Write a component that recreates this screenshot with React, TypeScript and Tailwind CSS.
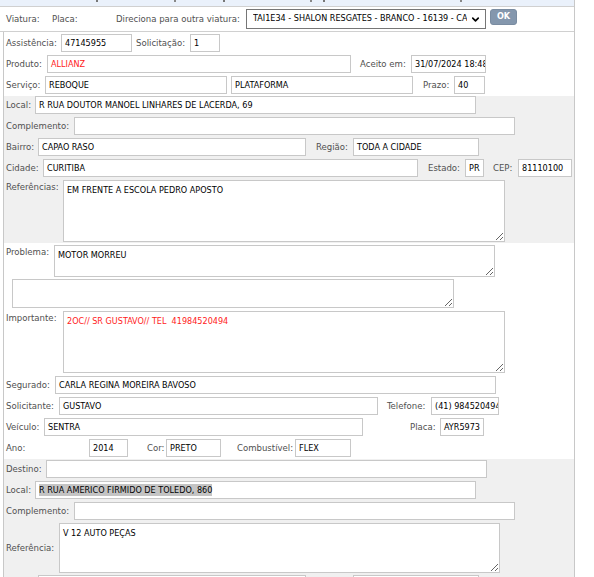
import { ChevronDown } from "lucide-react";

const LBL = "text-[9.5px] leading-[12px] text-[#505050] whitespace-nowrap shrink-0";
const INP =
  "h-[18px] shrink-0 border border-[#c8c8c8] bg-white pl-[3px] text-[9px] leading-[16px] whitespace-nowrap overflow-hidden";
const TA =
  "block shrink-0 resize border border-[#c8c8c8] bg-white pl-[3px] pt-[3px] text-[9px] leading-[12px] outline-none overflow-hidden";

export default function App() {
  return (
    <div className="w-[594px] h-[577px] overflow-hidden bg-white text-black font-['DejaVu_Sans_Condensed','DejaVu_Sans',sans-serif]">
      <div className="w-[575px] border-r border-[#c8c8c8] h-[577px]">
        {/* top clipped strip */}
        <div className="h-[7px] bg-[#eaf1fb] border-b border-[#d0d0d0] flex items-start">
          <div className="ml-[96px] w-[2px] h-[2px] bg-[#777]" />
          <div className="ml-[76px] w-[2px] h-[2px] bg-[#888]" />
          <div className="ml-[47px] w-[2px] h-[2px] bg-[#777]" />
          <div className="ml-[85px] w-[2px] h-[2px] bg-[#888]" />
          <div className="ml-[11px] w-[2px] h-[2px] bg-[#777]" />
          <div className="ml-[135px] w-[2px] h-[2px] bg-[#888]" />
        </div>

        {/* Viatura row */}
        <div className="h-[25px] border-b border-[#d0d0d0] flex items-center pl-[6px]">
          <span className={`${LBL} w-[46px]`}>Viatura:</span>
          <span className={`${LBL} w-[64px]`}>Placa:</span>
          <span className={`${LBL} w-[130px]`}>Direciona para outra viatura:</span>
          <div className="w-[240px] h-[20px] border border-[#767676] bg-white flex items-center pl-[6px] pr-[4px]">
            <span className="flex-1 overflow-hidden whitespace-nowrap text-[9px] text-black">
              TAI1E34 - SHALON RESGATES - BRANCO - 16139 - CAMINHAO
            </span>
            <ChevronDown size={11} strokeWidth={3.5} className="text-black ml-[3px] shrink-0" />
          </div>
          <div className="ml-[4px] self-start mt-[2px] w-[27px] h-[16px] rounded-[3px] bg-[#8497ad] border border-[#7a8ca1] flex items-center justify-center text-[9px] font-bold text-white">
            OK
          </div>
        </div>

        {/* body */}
        <div className="ml-[3px] border-l border-[#c8c8c8] h-[545px]">
          {/* section 1 white */}
          <div className="pt-[2px] pb-[2px] pl-[2px]">
            <div className="flex items-center h-[18px]">
              <span className={`${LBL} w-[55px]`}>Assistência:</span>
              <div className={`${INP} w-[71px]`}>47145955</div>
              <span className={`${LBL} ml-[4px] w-[54px]`}>Solicitação:</span>
              <div className={`${INP} w-[30px]`}>1</div>
            </div>
            <div className="flex items-center h-[18px] mt-[3px]">
              <span className={`${LBL} w-[41px]`}>Produto:</span>
              <div className={`${INP} w-[304px] text-[#ff1a1a]`}>ALLIANZ</div>
              <span className={`${LBL} ml-[9px] w-[51px]`}>Aceito em:</span>
              <div className={`${INP} w-[75px]`}>31/07/2024 18:48</div>
            </div>
            <div className="flex items-center h-[18px] mt-[3px]">
              <span className={`${LBL} w-[39px]`}>Serviço:</span>
              <div className={`${INP} w-[182px]`}>REBOQUE</div>
              <div className={`${INP} ml-[4px] w-[182px]`}>PLATAFORMA</div>
              <span className={`${LBL} ml-[10px] w-[31px]`}>Prazo:</span>
              <div className={`${INP} w-[31px]`}>40</div>
            </div>
          </div>

          {/* section 2 gray */}
          <div className="bg-[#f0f0f0] pb-[1px] pl-[2px]">
            <div className="flex items-center h-[18px]">
              <span className={`${LBL} w-[29px]`}>Local:</span>
              <div className={`${INP} w-[441px]`}>R RUA DOUTOR MANOEL LINHARES DE LACERDA, 69</div>
            </div>
            <div className="flex items-center h-[18px] mt-[3px]">
              <span className={`${LBL} w-[68px]`}>Complemento:</span>
              <div className={`${INP} w-[441px]`}></div>
            </div>
            <div className="flex items-center h-[18px] mt-[3px]">
              <span className={`${LBL} w-[32px]`}>Bairro:</span>
              <div className={`${INP} w-[268px]`}>CAPAO RASO</div>
              <span className={`${LBL} ml-[10px] w-[37px]`}>Região:</span>
              <div className={`${INP} w-[126px]`}>TODA A CIDADE</div>
            </div>
            <div className="flex items-center h-[18px] mt-[3px]">
              <span className={`${LBL} w-[37px]`}>Cidade:</span>
              <div className={`${INP} w-[375px]`}>CURITIBA</div>
              <span className={`${LBL} ml-[10px] w-[37px]`}>Estado:</span>
              <div className={`${INP} w-[19px] pl-[1px]`}>PR</div>
              <span className={`${LBL} ml-[9px] w-[25px]`}>CEP:</span>
              <div className={`${INP} w-[54px]`}>81110100</div>
            </div>
            <div className="flex items-start mt-[3px]">
              <span className={`${LBL} w-[57px] mt-[1px]`}>Referências:</span>
              <textarea
                readOnly
                className={`${TA} w-[442px] h-[62px] text-black`}
                defaultValue="EM FRENTE A ESCOLA PEDRO APOSTO"
              />
            </div>
          </div>

          {/* section 3 white */}
          <div className="pt-[2px] pb-[2px] pl-[2px]">
            <div className="flex items-start">
              <span className={`${LBL} w-[48px] mt-[1px]`}>Problema:</span>
              <textarea readOnly className={`${TA} w-[441px] h-[32px] text-black`} defaultValue="MOTOR MORREU" />
            </div>
            <div className="flex items-start mt-[2px]">
              <div className="w-[6px] shrink-0" />
              <textarea readOnly className={`${TA} w-[442px] h-[29px] text-black`} defaultValue="" />
            </div>
            <div className="flex items-start mt-[3px]">
              <span className={`${LBL} w-[57px] mt-[1px]`}>Importante:</span>
              <textarea
                readOnly
                className={`${TA} w-[442px] h-[62px] text-[#ff1a1a]`}
                defaultValue="2OC// SR GUSTAVO// TEL  41984520494"
              />
            </div>
            <div className="flex items-center h-[18px] mt-[3px]">
              <span className={`${LBL} w-[49px]`}>Segurado:</span>
              <div className={`${INP} w-[441px]`}>CARLA REGINA MOREIRA BAVOSO</div>
            </div>
            <div className="flex items-center h-[18px] mt-[3px]">
              <span className={`${LBL} w-[53px]`}>Solicitante:</span>
              <div className={`${INP} w-[319px]`}>GUSTAVO</div>
              <span className={`${LBL} ml-[9px] w-[44px]`}>Telefone:</span>
              <div className={`${INP} w-[68px]`}>(41) 984520494</div>
            </div>
            <div className="flex items-center h-[18px] mt-[3px]">
              <span className={`${LBL} w-[38px]`}>Veículo:</span>
              <div className={`${INP} w-[319px]`}>SENTRA</div>
              <span className={`${LBL} ml-[47px] w-[30px]`}>Placa:</span>
              <div className={`${INP} w-[44px]`}>AYR5973</div>
            </div>
            <div className="flex items-center h-[18px] mt-[3px]">
              <span className={`${LBL} w-[83px]`}>Ano:</span>
              <div className={`${INP} w-[39px]`}>2014</div>
              <span className={`${LBL} ml-[19px] w-[19px]`}>Cor:</span>
              <div className={`${INP} w-[55px]`}>PRETO</div>
              <span className={`${LBL} ml-[16px] w-[58px]`}>Combustível:</span>
              <div className={`${INP} w-[56px]`}>FLEX</div>
            </div>
          </div>

          {/* section 4 gray */}
          <div className="bg-[#f0f0f0] pt-[1px] pl-[2px] h-[200px]">
            <div className="flex items-center h-[18px]">
              <span className={`${LBL} w-[40px]`}>Destino:</span>
              <div className={`${INP} w-[441px]`}></div>
            </div>
            <div className="flex items-center h-[18px] mt-[3px]">
              <span className={`${LBL} w-[29px]`}>Local:</span>
              <div className={`${INP} w-[441px]`}>
                <span className="bg-[#c4c4c4] py-[1px]">R RUA AMERICO FIRMIDO DE TOLEDO, 860</span>
              </div>
            </div>
            <div className="flex items-center h-[18px] mt-[3px]">
              <span className={`${LBL} w-[68px]`}>Complemento:</span>
              <div className={`${INP} w-[441px]`}></div>
            </div>
            <div className="flex items-center mt-[3px]">
              <span className={`${LBL} w-[53px]`}>Referência:</span>
              <textarea readOnly className={`${TA} w-[441px] h-[50px] text-black`} defaultValue="V 12 AUTO PEÇAS" />
            </div>
            <div className="flex items-start h-[18px] mt-[2px]">
              <div className="w-[32px] shrink-0" />
              <div className={`${INP} w-[268px]`}></div>
              <div className="w-[47px] shrink-0" />
              <div className={`${INP} w-[126px]`}></div>
            </div>
          </div>
        </div>
      </div>
    </div>
  );
}
